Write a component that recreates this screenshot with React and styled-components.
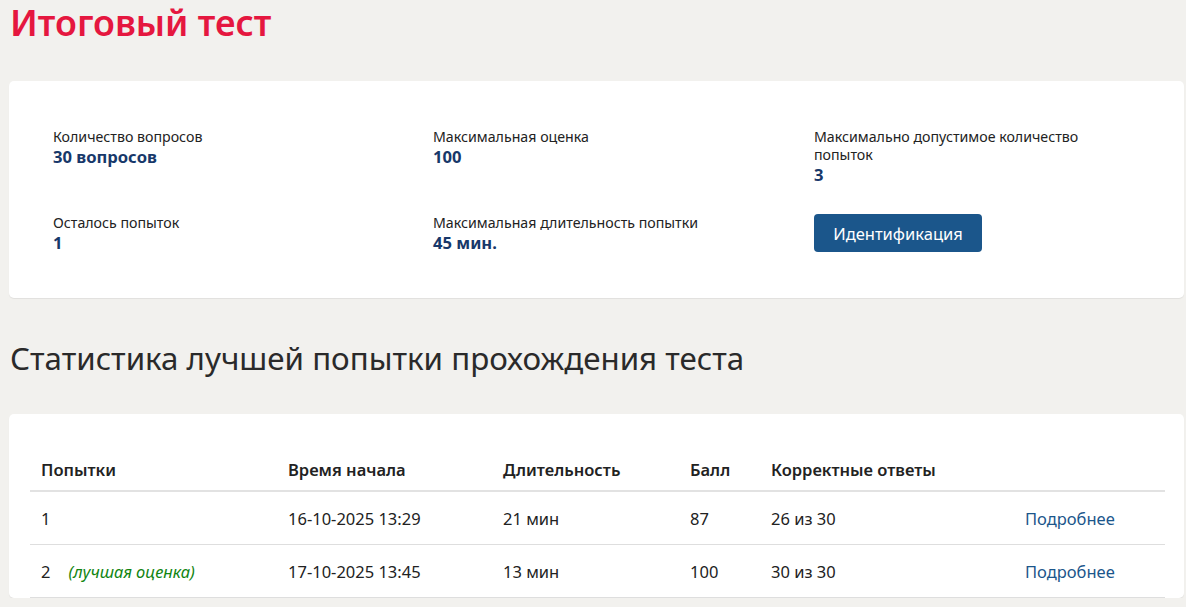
import React from 'react';
import styled, { createGlobalStyle } from 'styled-components';

const GlobalStyle = createGlobalStyle`
  html, body {
    margin: 0;
    padding: 0;
    background: #f2f1ee;
  }
  body {
    font-family: "Noto Sans", "Open Sans", sans-serif;
    color: #222;
  }
`;

const Page = styled.div`
  padding: 0 2px 0 9px;
`;

const Title = styled.h1`
  margin: 0;
  padding: 0 0 0 1px;
  height: 81px;
  box-sizing: border-box;
  font-size: 35.8px;
  line-height: 44px;
  font-weight: 600;
  color: #e5173f;
`;

const Card = styled.section`
  background: #fff;
  border-radius: 5px;
  box-shadow: 0 1px 1px rgba(0, 0, 0, 0.07);
`;

const InfoCard = styled(Card)`
  padding: 47px 44px 44px;
  display: grid;
  grid-template-columns: 380px 381px 1fr;
  row-gap: 28px;
`;

const InfoItem = styled.div`
  display: flex;
  flex-direction: column;
  max-width: 275px;
`;

const Label = styled.div`
  font-size: 14.2px;
  line-height: 18px;
  color: #222;
`;

const Value = styled.div`
  font-size: 16.6px;
  line-height: 22px;
  font-weight: 700;
  color: #17386a;
`;

const Button = styled.button`
  width: 168px;
  height: 38px;
  border: none;
  border-radius: 4px;
  background: #1b568b;
  color: #fff;
  font-family: inherit;
  font-size: 16.5px;
  cursor: pointer;
`;

const SectionTitle = styled.h2`
  margin: 0;
  padding: 36px 0 0 1px;
  height: 116px;
  box-sizing: border-box;
  font-size: 31.3px;
  line-height: 48px;
  font-weight: 400;
  color: #2a2a2a;
`;

const TableCard = styled(Card)`
  padding: 35px 19px 0 21px;
`;

const Table = styled.table`
  width: 100%;
  table-layout: fixed;
  border-collapse: collapse;
  font-size: 16.5px;
`;

const Col = styled.col`
  width: ${p => p.$w};
`;

const Th = styled.th`
  text-align: left;
  font-weight: 600;
  height: 41px;
  padding: 0 11px;
  border-bottom: 2px solid #e2e2e2;
`;

const Td = styled.td`
  height: 52px;
  padding: 0 11px;
  border-bottom: 1px solid #dedede;
  color: #222;
  white-space: nowrap;
`;

const Best = styled.em`
  margin-left: 18px;
  color: #128512;
`;

const MoreLink = styled.a`
  color: #1b568b;
  text-decoration: none;
`;

const info = [
  { label: 'Количество вопросов', value: '30 вопросов' },
  { label: 'Максимальная оценка', value: '100' },
  { label: 'Максимально допустимое количество попыток', value: '3' },
  { label: 'Осталось попыток', value: '1' },
  { label: 'Максимальная длительность попытки', value: '45 мин.' },
];

const columns = [
  { title: 'Попытки', w: '247px' },
  { title: 'Время начала', w: '215px' },
  { title: 'Длительность', w: '187px' },
  { title: 'Балл', w: '81px' },
  { title: 'Корректные ответы', w: '254px' },
  { title: '', w: '151px' },
];

const attempts = [
  { n: 1, start: '16-10-2025 13:29', dur: '21 мин', score: 87, correct: '26 из 30' },
  { n: 2, best: true, start: '17-10-2025 13:45', dur: '13 мин', score: 100, correct: '30 из 30' },
];

export default function App() {
  return (
    <Page>
      <GlobalStyle />
      <Title>Итоговый тест</Title>
      <InfoCard>
        {info.map(item => (
          <InfoItem key={item.label}>
            <Label>{item.label}</Label>
            <Value>{item.value}</Value>
          </InfoItem>
        ))}
        <InfoItem>
          <Button>Идентификация</Button>
        </InfoItem>
      </InfoCard>
      <SectionTitle>Статистика лучшей попытки прохождения теста</SectionTitle>
      <TableCard>
        <Table>
          <colgroup>
            {columns.map((c, i) => <Col key={i} $w={c.w} />)}
          </colgroup>
          <thead>
            <tr>
              {columns.map((c, i) => <Th key={i}>{c.title}</Th>)}
            </tr>
          </thead>
          <tbody>
            {attempts.map(a => (
              <tr key={a.n}>
                <Td>
                  {a.n}
                  {a.best && <Best>(лучшая оценка)</Best>}
                </Td>
                <Td>{a.start}</Td>
                <Td>{a.dur}</Td>
                <Td>{a.score}</Td>
                <Td>{a.correct}</Td>
                <Td>
                  <MoreLink href="#">Подробнее</MoreLink>
                </Td>
              </tr>
            ))}
          </tbody>
        </Table>
      </TableCard>
    </Page>
  );
}
